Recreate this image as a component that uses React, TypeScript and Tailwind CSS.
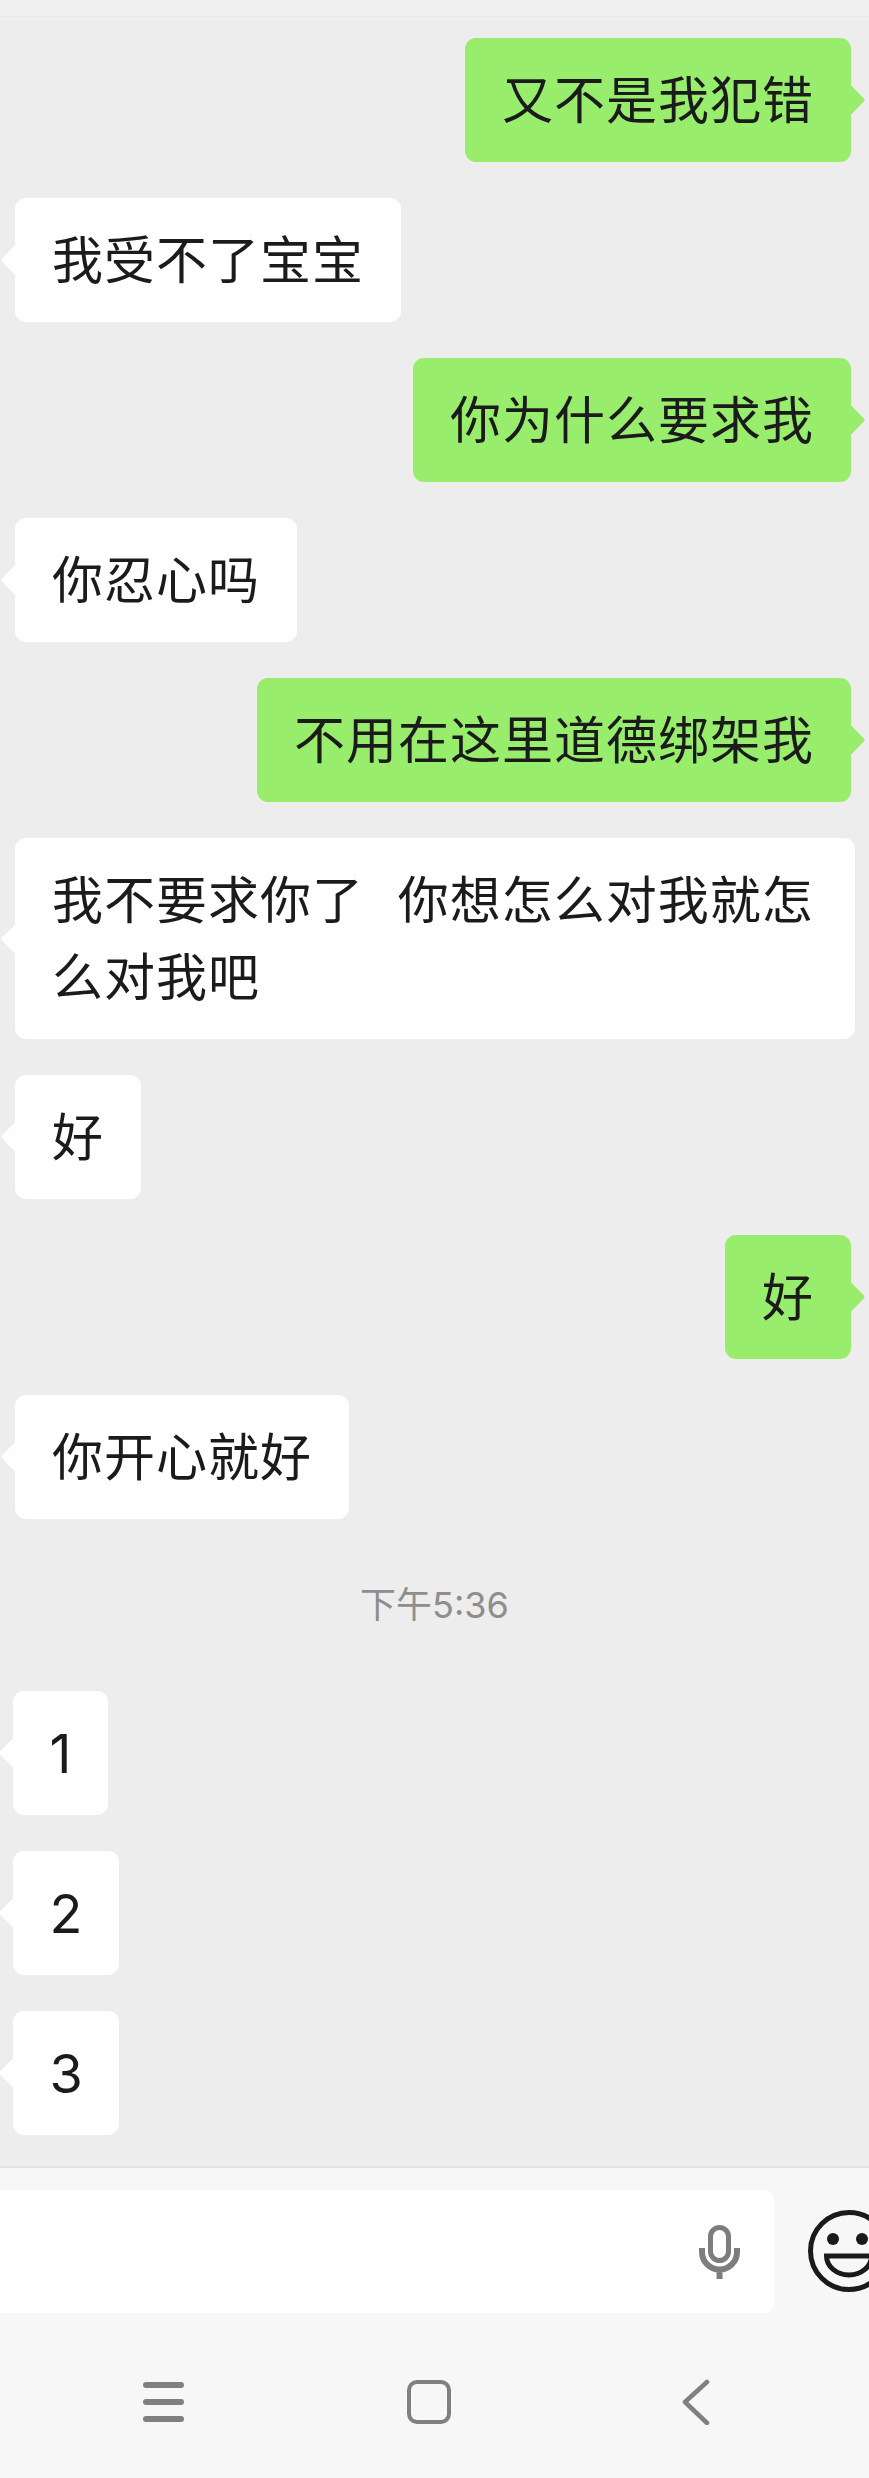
const fonts = "font-['Inter','Noto_Sans_CJK_SC',sans-serif]";

type Msg = { text: string; mine?: boolean; width?: string };

const messages: Msg[] = [
  { text: "又不是我犯错", mine: true },
  { text: "我受不了宝宝" },
  { text: "你为什么要求我", mine: true },
  { text: "你忍心吗" },
  { text: "不用在这里道德绑架我", mine: true },
  { text: "我不要求你了  你想怎么对我就怎么对我吧", width: "w-[840px]" },
  { text: "好" },
  { text: "好", mine: true },
  { text: "你开心就好" },
];

function Bubble({ text, mine, width }: Msg) {
  return (
    <div className={mine ? "flex justify-end pr-[18px]" : "flex justify-start pl-[15px]"}>
      <div
        className={`relative rounded-[11px] px-[37px] py-[23.5px] text-[51px] leading-[77px] tracking-[1px] text-[#1b1b1b] whitespace-pre-wrap [word-spacing:1.5px] ${
          mine ? "bg-[#98ee6c]" : "bg-white"
        } ${width ?? ""}`}
      >
        {text}
        <div
          className={`absolute top-1/2 h-[22px] w-[22px] -translate-y-1/2 rotate-45 rounded-[3px] ${
            mine ? "-right-[10px] bg-[#98ee6c]" : "-left-[10px] bg-white"
          }`}
        />
      </div>
    </div>
  );
}

function Digit({ text }: { text: string }) {
  return (
    <div className="flex justify-start pl-[13px]">
      <div className="relative rounded-[11px] bg-white px-[36.5px] py-[23.5px] text-[54px] leading-[77px] text-[#1b1b1b]">
        {text}
        <div className="absolute -left-[10px] top-1/2 h-[22px] w-[22px] -translate-y-1/2 rotate-45 rounded-[3px] bg-white" />
      </div>
    </div>
  );
}

export default function App() {
  return (
    <div className={`flex h-[2478px] w-[869px] flex-col overflow-hidden bg-[#ededed] ${fonts}`}>
      <div className="h-[17px] shrink-0 border-b border-[#e8e8e8] bg-[#f0f0f0]" />
      <div className="flex flex-1 flex-col pt-[21px]">
        <div className="flex flex-col gap-[36px]">
          {messages.map((m, i) => (
            <Bubble key={i} {...m} />
          ))}
        </div>
        <div className="mt-[66px] text-center text-[36px] leading-[40px] text-[#8e8e8e]">下午5:36</div>
        <div className="mt-[66px] flex flex-col gap-[36px]">
          {["1", "2", "3"].map((d) => (
            <Digit key={d} text={d} />
          ))}
        </div>
      </div>
      <div className="h-[312px] shrink-0 border-t-2 border-[#e3e3e3] bg-[#f7f7f7]">
        <div className="mt-[22px] flex items-start">
          <div className="flex h-[123px] w-[774px] items-center justify-end rounded-r-[10px] bg-white pr-[34px]">
            <svg width="41" height="54" viewBox="0 0 41 54" fill="none" stroke="#7d7d7d">
              <rect x="11.5" y="2.5" width="18" height="33" rx="9" strokeWidth="5" />
              <path d="M3 23v4a17.5 17.5 0 0 0 35 0v-4M20.5 45v9" strokeWidth="6" />
            </svg>
          </div>
          <svg className="ml-[34px] mt-[20px] shrink-0" width="61" height="82" viewBox="0 0 61 82" fill="none" stroke="#1a1a1a" strokeWidth="5">
            <circle cx="41" cy="41" r="38.5" />
            <circle cx="25" cy="29" r="6" fill="#1a1a1a" stroke="none" />
            <circle cx="54" cy="29" r="6" fill="#1a1a1a" stroke="none" />
            <path d="M18.5 46H63.5a22.5 19 0 0 1-45 0z" />
          </svg>
        </div>
        <div className="mt-[66px] flex items-center">
          <div className="ml-[143px] flex w-[41px] flex-col gap-[11px]">
            <div className="h-[6px] rounded-full bg-[#808080]" />
            <div className="h-[6px] rounded-full bg-[#808080]" />
            <div className="h-[6px] rounded-full bg-[#808080]" />
          </div>
          <div className="ml-[223px] h-[44px] w-[44px] rounded-[10px] border-[4px] border-[#808080]" />
          <svg className="ml-[231px]" width="30" height="46" viewBox="0 0 30 46" fill="none" stroke="#808080" strokeWidth="4.5" strokeLinecap="round" strokeLinejoin="round">
            <path d="M25 3L3 23l22 21" />
          </svg>
        </div>
      </div>
    </div>
  );
}
